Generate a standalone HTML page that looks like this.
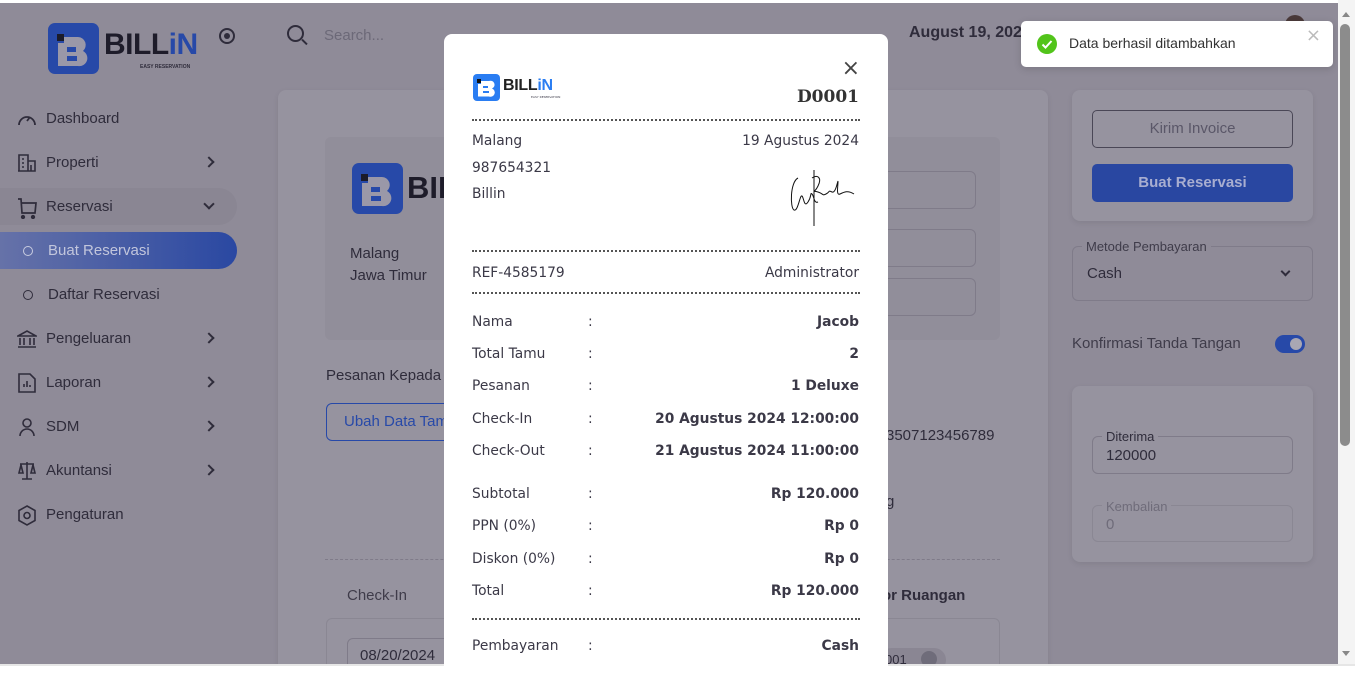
<!DOCTYPE html>
<html><head><meta charset="utf-8"><style>
*{box-sizing:border-box;margin:0;padding:0}
body{width:1355px;height:666px;overflow:hidden;background:#fff;font-family:"Liberation Sans",sans-serif;position:relative}
.page{position:absolute;left:0;top:3px;width:1338px;height:661px;background:#8f8b98;overflow:hidden}
.t{position:absolute;color:#2f2c3b;font-size:15px;white-space:nowrap}
.nav{position:absolute;left:18px;font-size:15px;color:#2f2c3b}
.chev{position:absolute;left:205px;width:8px;height:8px;border-right:2px solid #2f2c3b;border-bottom:2px solid #2f2c3b;transform:rotate(-45deg)}
.card{position:absolute;background:#96939f;border-radius:8px;box-shadow:0 2px 6px rgba(0,0,0,.08)}
.inp{position:absolute;border:1px solid #7f7b89;border-radius:6px}
.modal{position:absolute;left:444px;top:34px;width:444px;height:640px;background:#fff;border-radius:8px;font-family:"DejaVu Sans",sans-serif;color:#3b3947}
.m{position:absolute;font-size:13.8px;white-space:nowrap}
.r{right:29px;text-align:right;font-weight:bold}
.dash{position:absolute;left:28px;width:388px;border-top:2px dotted #555}
</style></head><body>
<div class="page">
 <!-- logo -->
 <svg style="position:absolute;left:48px;top:20px" width="51" height="51"><rect width="51" height="51" rx="7" fill="#2749a8"/><rect x="9" y="11" width="7" height="7" fill="#1b1b2a"/><path d="M10 20h6v-6h14a8 8 0 0 1 5 14 8 8 0 0 1-5 15H10z" fill="#9a98a8"/><path d="M19 24h9v5h-9zM19 33h10v5h-10z" fill="#2749a8"/></svg>
 <div class="t" style="left:104px;top:25px;font-size:30px;font-weight:bold;color:#1e1c2a;letter-spacing:-.5px">BILL<span style="color:#2749a8">iN</span></div>
 <div class="t" style="left:140px;top:61px;font-size:5px;font-weight:bold">EASY RESERVATION</div>
 <div style="position:absolute;left:219px;top:25px;width:16px;height:16px;border:2px solid #2f2c3b;border-radius:50%"><div style="margin:3px;width:6px;height:6px;background:#2f2c3b;border-radius:50%"></div></div>
 <!-- search -->
 <div style="position:absolute;left:287px;top:22px;width:17px;height:17px;border:2px solid #2f2c3b;border-radius:50%"></div>
 <div style="position:absolute;left:301px;top:38px;width:7px;height:2px;background:#2f2c3b;transform:rotate(45deg)"></div>
 <div class="t" style="left:324px;top:24px;color:#6c6978;font-size:15px">Search...</div>
 <div class="t" style="left:909px;top:21px;font-weight:bold;font-size:16px">August 19, 2024</div>
 <div style="position:absolute;left:1285px;top:12px;width:20px;height:20px;border-radius:50%;background:#4a3a3a"></div>
 <!-- sidebar -->
 <div style="position:absolute;left:0;top:185px;width:237px;height:37px;background:#8a8693;border-radius:0 20px 20px 0"></div>
 <div style="position:absolute;left:0;top:229px;width:237px;height:37px;background:linear-gradient(90deg,#6672a8,#2a48a2);border-radius:0 20px 20px 0"></div>
 <svg style="position:absolute;left:17px;top:106px" width="20" height="20" fill="none" stroke="#2f2c3b" stroke-width="1.8"><path d="M2 16A8 8 0 1 1 18 16"/><path d="M10 12l3-4"/></svg>
 <div class="nav" style="left:46px;top:107px">Dashboard</div>
 <svg style="position:absolute;left:17px;top:150px" width="20" height="20" fill="none" stroke="#2f2c3b" stroke-width="1.6"><path d="M2 18V2h9v16M11 8h7v10H1M5 6h2M5 10h2M5 14h2M14 12v6"/></svg>
 <div class="nav" style="left:46px;top:151px">Properti</div><div class="chev" style="top:155px"></div>
 <svg style="position:absolute;left:17px;top:194px" width="22" height="22" fill="none" stroke="#2f2c3b" stroke-width="1.7"><path d="M1 2h3l1 14h13l1-10H5"/><circle cx="6" cy="20" r="1.3" fill="#2f2c3b"/><circle cx="16" cy="20" r="1.3" fill="#2f2c3b"/></svg>
 <div class="nav" style="left:46px;top:195px">Reservasi</div><div class="chev" style="top:197px;transform:rotate(45deg)"></div>
 <div style="position:absolute;left:23px;top:243px;width:10px;height:10px;border:1.3px solid #c8cce0;border-radius:50%"></div>
 <div class="nav" style="left:48px;top:239px;color:#c2c6dc">Buat Reservasi</div>
 <div style="position:absolute;left:23px;top:287px;width:10px;height:10px;border:1.3px solid #2f2c3b;border-radius:50%"></div>
 <div class="nav" style="left:48px;top:283px">Daftar Reservasi</div>
 <svg style="position:absolute;left:17px;top:326px" width="20" height="20" fill="none" stroke="#2f2c3b" stroke-width="1.6"><path d="M1 7L10 2l9 5zM3 9v7M7 9v7M13 9v7M17 9v7M1 18h18"/></svg>
 <div class="nav" style="left:46px;top:327px">Pengeluaran</div><div class="chev" style="top:331px"></div>
 <svg style="position:absolute;left:17px;top:370px" width="20" height="20" fill="none" stroke="#2f2c3b" stroke-width="1.6"><path d="M2 1h11l5 5v13H2zM7 14v-3M10 14V8M13 14v-2"/></svg>
 <div class="nav" style="left:46px;top:371px">Laporan</div><div class="chev" style="top:375px"></div>
 <svg style="position:absolute;left:17px;top:414px" width="20" height="20" fill="none" stroke="#2f2c3b" stroke-width="1.6"><circle cx="10" cy="6" r="4"/><path d="M3 19a7 7 0 0 1 14 0"/></svg>
 <div class="nav" style="left:46px;top:415px">SDM</div><div class="chev" style="top:419px"></div>
 <svg style="position:absolute;left:17px;top:458px" width="20" height="20" fill="none" stroke="#2f2c3b" stroke-width="1.6"><path d="M10 1v17M3 3h14M2 12l2-8 2 8zM14 12l2-8 2 8zM5 18h10"/></svg>
 <div class="nav" style="left:46px;top:459px">Akuntansi</div><div class="chev" style="top:463px"></div>
 <svg style="position:absolute;left:17px;top:502px" width="20" height="22" fill="none" stroke="#2f2c3b" stroke-width="1.6"><path d="M10 1l8 4.5v10L10 20l-8-4.5v-10z"/><circle cx="10" cy="10.5" r="3"/></svg>
 <div class="nav" style="left:46px;top:503px">Pengaturan</div>
 <!-- main card -->
 <div class="card" style="left:278px;top:87px;width:770px;height:600px"></div>
 <div style="position:absolute;left:325px;top:134px;width:675px;height:203px;background:#918e9a;border-radius:6px"></div>
 <svg style="position:absolute;left:352px;top:160px" width="51" height="51"><rect width="51" height="51" rx="7" fill="#2749a8"/><rect x="9" y="11" width="7" height="7" fill="#1b1b2a"/><path d="M10 20h6v-6h14a8 8 0 0 1 5 14 8 8 0 0 1-5 15H10z" fill="#9a98a8"/><path d="M19 24h9v5h-9zM19 33h10v5h-10z" fill="#2749a8"/></svg>
 <div class="t" style="left:407px;top:167px;font-size:31px;font-weight:bold;color:#1e1c2a">BIL</div>
 <div class="t" style="left:350px;top:242px">Malang</div>
 <div class="t" style="left:350px;top:264px">Jawa Timur</div>
 <div class="inp" style="left:860px;top:168px;width:116px;height:38px"></div>
 <div class="inp" style="left:860px;top:226px;width:116px;height:38px"></div>
 <div class="inp" style="left:860px;top:275px;width:116px;height:38px"></div>
 <div class="t" style="left:326px;top:364px">Pesanan Kepada</div>
 <div style="position:absolute;left:326px;top:400px;width:130px;height:38px;border:1.5px solid #2749a8;border-radius:6px"></div>
 <div class="t" style="left:344px;top:410px;color:#2749a8">Ubah Data Tamu</div>
 <div class="t" style="left:886px;top:424px">3507123456789</div>
 <div class="t" style="left:886px;top:490px">g</div>
 <div style="position:absolute;left:325px;top:556px;width:675px;border-top:1px dashed #7f7b89"></div>
 <div class="t" style="left:347px;top:584px;color:#3f3c4a">Check-In</div>
 <div class="t" style="left:882px;top:584px;font-weight:bold;font-size:15px">or Ruangan</div>
 <div class="inp" style="left:326px;top:615px;width:674px;height:60px;border-color:#8a8793"></div>
 <div class="inp" style="left:347px;top:635px;width:110px;height:40px"></div>
 <div class="t" style="left:360px;top:644px">08/20/2024</div>
 <div style="position:absolute;left:880px;top:645px;width:66px;height:24px;background:#8a8693;border-radius:12px"></div>
 <div class="t" style="left:885px;top:649px;font-size:13px">001</div>
 <div style="position:absolute;left:921px;top:648px;width:16px;height:16px;border-radius:50%;background:#6f6c7a"></div>
 <!-- right -->
 <div class="card" style="left:1072px;top:87px;width:241px;height:131px"></div>
 <div style="position:absolute;left:1092px;top:107px;width:201px;height:38px;border:1px solid #4a4756;border-radius:5px"></div>
 <div class="t" style="left:1092px;top:117px;width:201px;text-align:center;color:#5a5768">Kirim Invoice</div>
 <div style="position:absolute;left:1092px;top:161px;width:201px;height:38px;background:#2947a1;border-radius:5px"></div>
 <div class="t" style="left:1092px;top:171px;width:201px;text-align:center;color:#a8aed0;font-weight:bold">Buat Reservasi</div>
 <div class="inp" style="left:1072px;top:243px;width:241px;height:55px"></div>
 <div class="t" style="left:1082px;top:236px;background:#8f8b98;padding:0 4px;font-size:13px;color:#3f3c4a">Metode Pembayaran</div>
 <div class="t" style="left:1087px;top:262px">Cash</div>
 <div class="chev" style="left:1282px;top:265px;transform:rotate(45deg);width:7px;height:7px"></div>
 <div class="t" style="left:1072px;top:332px;color:#3f3c4a">Konfirmasi Tanda Tangan</div>
 <div style="position:absolute;left:1275px;top:332px;width:30px;height:18px;background:#2749a8;border-radius:9px"><div style="position:absolute;right:3px;top:3px;width:12px;height:12px;background:#a9a7b3;border-radius:50%"></div></div>
 <div class="card" style="left:1072px;top:383px;width:241px;height:176px"></div>
 <div class="inp" style="left:1092px;top:433px;width:201px;height:38px"></div>
 <div class="t" style="left:1102px;top:426px;background:#96939f;padding:0 4px;font-size:13px">Diterima</div>
 <div class="t" style="left:1106px;top:444px">120000</div>
 <div class="inp" style="left:1092px;top:502px;width:201px;height:37px;border-color:#8a8793"></div>
 <div class="t" style="left:1102px;top:496px;background:#96939f;padding:0 4px;font-size:13px;color:#6f6c7a">Kembalian</div>
 <div class="t" style="left:1106px;top:513px;color:#6f6c7a">0</div>
</div>
<!-- scrollbar -->
<div style="position:absolute;left:1338px;top:0;width:17px;height:666px;background:#f4f4f4"></div>
<div style="position:absolute;left:1340px;top:24px;width:10px;height:422px;background:#8c8c8c;border-radius:5px"></div>
<div style="position:absolute;left:1342px;top:12px;border:4px solid transparent;border-bottom:5px solid #888;border-top:0"></div>
<div style="position:absolute;left:1342px;top:651px;border:4px solid transparent;border-top:5px solid #888;border-bottom:0"></div>
<div style="position:absolute;left:0;top:664px;width:1355px;height:2px;background:#e6e6e6"></div>
<!-- modal -->
<div class="modal">
 <svg style="position:absolute;left:29px;top:40px" width="27" height="27"><rect width="27" height="27" rx="4" fill="#2a7df2"/><rect x="4" y="5" width="4" height="4" fill="#111"/><path d="M5 10h3V7h8a4 4 0 0 1 3 7.5 4 4 0 0 1-3 8H5z" fill="#fff"/><path d="M10 12h5v2h-5zM10 17h6v2h-6z" fill="#2a7df2"/></svg>
 <div class="m" style="left:59px;top:43px;font:bold 16px 'Liberation Sans';color:#222;letter-spacing:-.3px">BILL<span style="color:#2a7df2">iN</span></div>
 <div class="m" style="left:87px;top:61px;font-size:3px">EASY RESERVATION</div>
 <div class="m" style="right:28px;top:22px;font-size:22px;color:#444;font-weight:normal;font-family:'DejaVu Sans'">×</div>
 <div class="m r" style="top:53px;font:bold 17px 'DejaVu Serif',serif;color:#333">D0001</div>
 <div class="dash" style="top:85px"></div>
 <div class="m" style="left:28px;top:99px">Malang</div>
 <div class="m r" style="top:99px;font-weight:normal">19 Agustus 2024</div>
 <div class="m" style="left:28px;top:126px">987654321</div>
 <div class="m" style="left:28px;top:152px">Billin</div>
 <svg style="position:absolute;left:344px;top:134px" width="72" height="60" fill="none" stroke="#111" stroke-width="1"><path d="M10 10C2 14 2 40 6 42c4 2 6-16 8-14s2 12 6 6 2-10 4-8 2 10 6 8"/><path d="M26 2v56"/><path d="M24 10c6-4 10 0 6 8s-6 4 0 6 4 4 8 2 2-4 6-2 6-14 6-10-2 14 2 12 8-4 14 0"/></svg>
 <div class="dash" style="top:216px"></div>
 <div class="m" style="left:28px;top:231px">REF-4585179</div>
 <div class="m r" style="top:231px;font-weight:normal">Administrator</div>
 <div class="dash" style="top:258px"></div>
 <div class="m" style="left:28px;top:280px">Nama</div><div class="m" style="left:144px;top:280px">:</div><div class="m r" style="top:280px">Jacob</div>
 <div class="m" style="left:28px;top:312px">Total Tamu</div><div class="m" style="left:144px;top:312px">:</div><div class="m r" style="top:312px">2</div>
 <div class="m" style="left:28px;top:344px">Pesanan</div><div class="m" style="left:144px;top:344px">:</div><div class="m r" style="top:344px">1 Deluxe</div>
 <div class="m" style="left:28px;top:377px">Check-In</div><div class="m" style="left:144px;top:377px">:</div><div class="m r" style="top:377px">20 Agustus 2024 12:00:00</div>
 <div class="m" style="left:28px;top:409px">Check-Out</div><div class="m" style="left:144px;top:409px">:</div><div class="m r" style="top:409px">21 Agustus 2024 11:00:00</div>
 <div class="m" style="left:28px;top:452px">Subtotal</div><div class="m" style="left:144px;top:452px">:</div><div class="m r" style="top:452px">Rp 120.000</div>
 <div class="m" style="left:28px;top:484px">PPN (0%)</div><div class="m" style="left:144px;top:484px">:</div><div class="m r" style="top:484px">Rp 0</div>
 <div class="m" style="left:28px;top:517px">Diskon (0%)</div><div class="m" style="left:144px;top:517px">:</div><div class="m r" style="top:517px">Rp 0</div>
 <div class="m" style="left:28px;top:549px">Total</div><div class="m" style="left:144px;top:549px">:</div><div class="m r" style="top:549px">Rp 120.000</div>
 <div class="dash" style="top:584px"></div>
 <div class="m" style="left:28px;top:604px">Pembayaran</div><div class="m" style="left:144px;top:604px">:</div><div class="m r" style="top:604px">Cash</div>
</div>
<!-- toast -->
<div style="position:absolute;left:1021px;top:21px;width:312px;height:46px;background:#fff;border-radius:5px;box-shadow:0 2px 8px rgba(0,0,0,.15)">
 <svg style="position:absolute;left:16px;top:13px" width="20" height="20"><circle cx="10" cy="10" r="10" fill="#52c41a"/><path d="M5.5 10.5l3 3 6-6.5" fill="none" stroke="#fff" stroke-width="2"/></svg>
 <div style="position:absolute;left:48px;top:14px;font:14px 'Liberation Sans';color:#333">Data berhasil ditambahkan</div>
 <div style="position:absolute;right:12px;top:4px;font:18px 'DejaVu Sans';color:#bbb">×</div>
</div>
</body></html>
